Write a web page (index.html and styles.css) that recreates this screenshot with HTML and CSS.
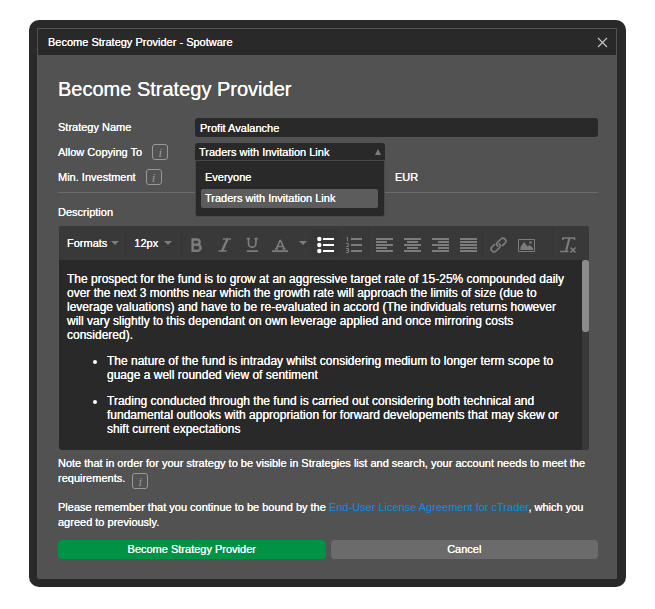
FILE: index.html
```
<!DOCTYPE html>
<html lang="en">
<head>
    <meta charset="UTF-8">
    <meta name="viewport" content="width=device-width, initial-scale=1.0">
    <title>Become Strategy Provider - Spotware</title>
    <link rel="stylesheet" href="styles.css">
</head>
<body>
    <div class="dialog" role="dialog" aria-labelledby="dialog-title">
        <div class="titlebar">
            <span id="dialog-title">Become Strategy Provider - Spotware</span>
            <button type="button" class="close-button" aria-label="Close">
                <svg width="11" height="11" viewBox="0 0 11 11"><path d="M1 1l9 9M10 1l-9 9" stroke="#c8c8c8" stroke-width="1.100" fill="none"/></svg>
            </button>
        </div>

        <form class="content">
            <h1>Become Strategy Provider</h1>

            <div class="row">
                <label class="row-label" for="strategy-name">Strategy Name</label>
                <input type="text" id="strategy-name" class="field" value="Profit Avalanche">
            </div>
            <div class="row">
                <div class="row-label">
                    <label for="copying">Allow Copying To</label>
                    <button type="button" class="info" aria-label="About copying">i</button>
                </div>
                <div class="dropdown">
                    <select id="copying" class="dropdown-select">
                        <option>Everyone</option>
                        <option selected>Traders with Invitation Link</option>
                    </select>
                    <span class="dropdown-arrow"></span>
                    <ul class="dropdown-menu">
                        <li>Everyone</li>
                        <li class="selected">Traders with Invitation Link</li>
                    </ul>
                </div>
            </div>
            <div class="row">
                <div class="row-label">
                    <label for="investment">Min. Investment</label>
                    <button type="button" class="info" aria-label="About minimum investment">i</button>
                </div>
                <input type="text" id="investment" class="field field-short">
                <span class="currency">EUR</span>
            </div>

            <hr class="divider">

            <div class="section-label" id="description-label">Description</div>
            <div class="editor">
                <div class="toolbar">
                    <button type="button" class="tool-menu formats">Formats <span class="caret"></span></button>
                    <button type="button" class="tool-menu sizes">12px <span class="caret"></span></button>
                    <div class="tool-group">
                        <button type="button" class="tool" aria-label="Bold">
                            <svg width="18" height="18" viewBox="0 0 18 18"><path d="M5.600 3.500h4.400a2.600 2.600 0 0 1 0 5.200h-4.400zM5.600 8.700h5a3 3 0 0 1 0 6h-5z" fill="none" stroke="currentColor" stroke-width="2.400"/></svg>
                        </button>
                        <button type="button" class="tool" aria-label="Italic">
                            <svg width="18" height="18" viewBox="0 0 18 18"><path d="M8 3h8M3.500 15h8" stroke="currentColor" stroke-width="1.700"/><path d="M12.500 3l-5.500 12" stroke="currentColor" stroke-width="2.400"/></svg>
                        </button>
                        <button type="button" class="tool" aria-label="Underline">
                            <svg width="18" height="18" viewBox="0 0 18 18"><path d="M5.500 2.500v5a3.700 3.700 0 0 0 7.400 0v-5M3.700 2.700h3.300M11.500 2.700h3.300M3.700 15.200h11.200" fill="none" stroke="currentColor" stroke-width="1.700"/></svg>
                        </button>
                        <button type="button" class="tool" aria-label="Text color">
                            <svg width="18" height="18" viewBox="0 0 18 18"><path d="M5 13.500l4-9h.6l4 9M6.500 10.500h5.500M4 13h3M11.500 13h3" fill="none" stroke="currentColor" stroke-width="1.700"/><path d="M1 15.200h16" stroke="currentColor" stroke-width="1.800"/></svg>
                        </button>
                        <button type="button" class="tool-narrow" aria-label="Choose text color"><span class="caret"></span></button>
                    </div>
                    <div class="tool-group">
                        <button type="button" class="tool active" aria-label="Bullet list">
                            <svg width="18" height="18" viewBox="0 0 18 18"><path d="M6 3h11M6 9h11M6 15h11" stroke="currentColor" stroke-width="2"/><circle cx="2.300" cy="3" r="2.200" fill="currentColor"/><circle cx="2.300" cy="9" r="2.200" fill="currentColor"/><circle cx="2.300" cy="15" r="2.200" fill="currentColor"/></svg>
                        </button>
                        <button type="button" class="tool" aria-label="Numbered list">
                            <svg width="18" height="18" viewBox="0 0 18 18"><path d="M6 3h11M6 9h11M6 15h11" stroke="currentColor" stroke-width="2"/><path d="M1.500 1.500h1v4M1 7.500h2.500v1.500l-2 1.500h2.200M1 12.500h2.500v4h-2.500M1.500 14.500h2" fill="none" stroke="currentColor"/></svg>
                        </button>
                    </div>
                    <div class="tool-group">
                        <button type="button" class="tool" aria-label="Align left">
                            <svg width="18" height="18" viewBox="0 0 18 18"><path d="M1 3h17M1 6h11M1 9h17M1 12h11M1 15h17" stroke="currentColor" stroke-width="2"/></svg>
                        </button>
                        <button type="button" class="tool" aria-label="Align center">
                            <svg width="18" height="18" viewBox="0 0 18 18"><path d="M1 3h17M4 6h11M1 9h17M4 12h11M1 15h17" stroke="currentColor" stroke-width="2"/></svg>
                        </button>
                        <button type="button" class="tool" aria-label="Align right">
                            <svg width="18" height="18" viewBox="0 0 18 18"><path d="M1 3h17M7 6h11M1 9h17M7 12h11M1 15h17" stroke="currentColor" stroke-width="2"/></svg>
                        </button>
                        <button type="button" class="tool" aria-label="Justify">
                            <svg width="18" height="18" viewBox="0 0 18 18"><path d="M1 3h17M1 6h17M1 9h17M1 12h17M1 15h17" stroke="currentColor" stroke-width="2"/></svg>
                        </button>
                    </div>
                    <div class="tool-group">
                        <button type="button" class="tool" aria-label="Insert link">
                            <svg width="18" height="18" viewBox="0 0 18 18"><g fill="none" stroke="currentColor" stroke-width="1.700" stroke-linecap="round"><path d="M8.700 10.200a2.900 2.900 0 0 1 0-4l3.200-3.200a2.900 2.900 0 0 1 4.100 4.100l-2.600 2.600"/><path d="M10.300 7.800a2.900 2.900 0 0 1 0 4l-3.200 3.200a2.900 2.900 0 0 1-4.100-4.100l2.600-2.600"/></g></svg>
                        </button>
                        <button type="button" class="tool" aria-label="Insert image">
                            <svg width="18" height="18" viewBox="0 0 18 18"><path d="M1.500 3.500h16v12h-16z" fill="none" stroke="currentColor"/><path d="M3.500 14v-3l3.500-5 3.500 4.500 2-1.500 3.500 3v2z" fill="currentColor"/><circle cx="13.500" cy="6.500" r="1.300" fill="currentColor"/></svg>
                        </button>
                    </div>
                    <div class="tool-group">
                        <button type="button" class="tool" aria-label="Clear formatting">
                            <svg width="18" height="18" viewBox="0 0 18 18"><path d="M4 4v-2h11.500v2M1 15.500h8.500" fill="none" stroke="currentColor" stroke-width="1.600"/><path d="M10.500 2l-3.500 13" stroke="currentColor" stroke-width="2.200"/><path d="M11.500 11.500l5 5M16.500 11.500l-5 5" stroke="currentColor" stroke-width="1.600"/></svg>
                        </button>
                    </div>
                </div>
                <div class="editor-body">
                    <div class="editor-text" contenteditable="true" role="textbox" aria-multiline="true" aria-labelledby="description-label">
                        <p>The prospect for the fund is to grow at an aggressive target rate of 15-25% compounded daily over the next 3 months near which the growth rate will approach the limits of size (due to leverage valuations) and have to be re-evaluated in accord (The individuals returns however will vary slightly to this dependant on own leverage applied and once mirroring costs considered).</p>
                        <ul>
                            <li>The nature of the fund is intraday whilst considering medium to longer term scope to guage a well rounded view of sentiment</li>
                            <li>Trading conducted through the fund is carried out considering both technical and fundamental outlooks with appropriation for forward developements that may skew or shift current expectations</li>
                        </ul>
                    </div>
                    <div class="scrollbar"><div class="scrollbar-thumb"></div></div>
                </div>
            </div>

            <p class="note">Note that in order for your strategy to be visible in Strategies list and search, your account needs to meet the requirements. <button type="button" class="info info-inline" aria-label="About requirements">i</button></p>
            <p class="note">Please remember that you continue to be bound by the <a href="#">End-User License Agreement for cTrader</a>, which you agreed to previously.</p>

            <div class="actions">
                <button type="submit" class="button button-primary">Become Strategy Provider</button>
                <button type="button" class="button">Cancel</button>
            </div>
        </form>
    </div>
</body>
</html>
```
FILE: styles.css
```
* {
    box-sizing: border-box;
}

body {
    margin: 0;
    padding: 20px 29px;
    background-color: #fff;
    color: #fff;
    font-family: "Liberation Sans", Arial, sans-serif;
    font-size: 11px;
    line-height: 15px;
    text-shadow: 0 0 currentColor;
}

button,
input,
select {
    margin: 0;
    padding: 0;
    border: none;
    background: none;
    color: inherit;
    font: inherit;
    text-shadow: inherit;
}

.dialog {
    border: 8px solid #292929;
    border-right-width: 9px;
    border-radius: 10px;
    background-color: #525252;
}

.titlebar {
    display: flex;
    justify-content: space-between;
    align-items: center;
    height: 27px;
    padding: 0 8px 0 10px;
    border: 1px solid #525252;
    border-bottom: none;
    background-color: #292929;
}

.close-button {
    display: flex;
}

.content {
    padding: 21px 19px 20px 21px;
}

h1 {
    margin: 0 0 15px;
    font-size: 20px;
    font-weight: normal;
    line-height: 27px;
}

/* Form rows */
.row {
    display: flex;
    height: 19px;
    margin-bottom: 6px;
}

.row-label {
    display: flex;
    align-items: center;
    gap: 10px;
    width: 137px;
}

.field {
    flex: 1;
    min-width: 0;
    padding: 1px 5px 0;
    border-radius: 3px;
    background-color: #292929;
}

.field-short {
    flex: none;
    width: 190px;
}

.currency {
    margin-left: 10px;
    line-height: 19px;
}

.info {
    width: 16px;
    height: 16px;
    margin-bottom: 1px;
    border: 1px solid #999;
    border-radius: 3px;
    color: #999;
    font-family: "Liberation Serif", "Times New Roman", serif;
    font-size: 13px;
    font-style: italic;
    line-height: 13px;
    text-shadow: none;
}

.info-inline {
    margin-top: 2px;
    margin-left: 4px;
    vertical-align: top;
}

.dropdown {
    position: relative;
    width: 190px;
}

.dropdown-select {
    display: block;
    width: 100%;
    height: 19px;
    padding-left: 4px;
    border-radius: 3px;
    background-color: #292929;
    appearance: none;
}

.dropdown-arrow {
    position: absolute;
    top: 6px;
    right: 4px;
    border: 3px solid transparent;
    border-top: none;
    border-bottom: 6px solid #7c7c7c;
}

.dropdown-menu {
    position: absolute;
    z-index: 1;
    top: 17px;
    left: 0;
    right: 0;
    margin: 0;
    padding: 7px 6px 8px 5px;
    border: 1px solid #484848;
    border-radius: 0 0 3px 3px;
    background-color: #292929;
    list-style: none;
}

.dropdown-menu li {
    padding: 0 4px;
    border-radius: 2px;
    line-height: 19px;
}

.dropdown-menu li + li {
    margin-top: 2px;
}

.dropdown-menu .selected {
    background-color: #5c5c5c;
}

.divider {
    height: 1px;
    margin: -1px 0 12px;
    border: none;
    background-color: #6b6b6b;
}

.section-label {
    margin-bottom: 6px;
}

/* Description editor */
.editor {
    margin: 0 9px 6px 1px;
    border-radius: 3px;
    background-color: #292929;
    overflow: hidden;
}

.toolbar {
    display: flex;
    align-items: center;
    height: 34px;
    background-color: #393939;
}

.tool-menu {
    display: flex;
    align-items: center;
    gap: 4px;
    height: 28px;
    padding: 0 6px 0 8px;
    border-right: 1px dotted #313131;
}

.sizes {
    gap: 6px;
    padding-right: 9px;
}

.caret {
    border: 4px solid transparent;
    border-top-color: #7c7c7c;
    border-bottom: none;
}

.tool-group {
    display: flex;
    color: #7c7c7c;
}

.tool-group + .tool-group {
    padding-left: 1px;
    border-left: 1px dotted #313131;
}

.tool-group:last-child {
    margin-right: 7px;
    margin-left: auto;
}

.tool,
.tool-narrow {
    display: flex;
    align-items: center;
    justify-content: center;
    width: 28px;
    height: 28px;
}

.tool {
    padding-top: 4px;
}

.tool-narrow {
    width: 16px;
    padding-left: 2px;
}

.active {
    background-color: #363636;
    color: #fff;
}

.editor-body {
    display: flex;
    height: 190px;
}

.editor-text {
    flex: 1;
    padding: 12px 8px 0;
    font-size: 12px;
    line-height: 14px;
    outline: none;
}

.editor-text p {
    margin: 0 0 12px;
}

.editor-text ul {
    margin: 0;
    padding-left: 40px;
}

.editor-text li {
    margin-bottom: 12px;
}

.scrollbar {
    width: 7px;
    background-color: #393939;
}

.scrollbar-thumb {
    height: 72px;
    border-radius: 3px;
    background-color: #8c8c8c;
}

.note {
    margin: 0 0 10px;
}

.note a {
    color: #0091ea;
    text-decoration: none;
    text-shadow: none;
}

.actions {
    display: flex;
    gap: 5px;
}

.button {
    flex: 1;
    height: 19px;
    border-radius: 4px;
    background-color: #6b6b6b;
}

.button-primary {
    background-color: #009345;
}
```
